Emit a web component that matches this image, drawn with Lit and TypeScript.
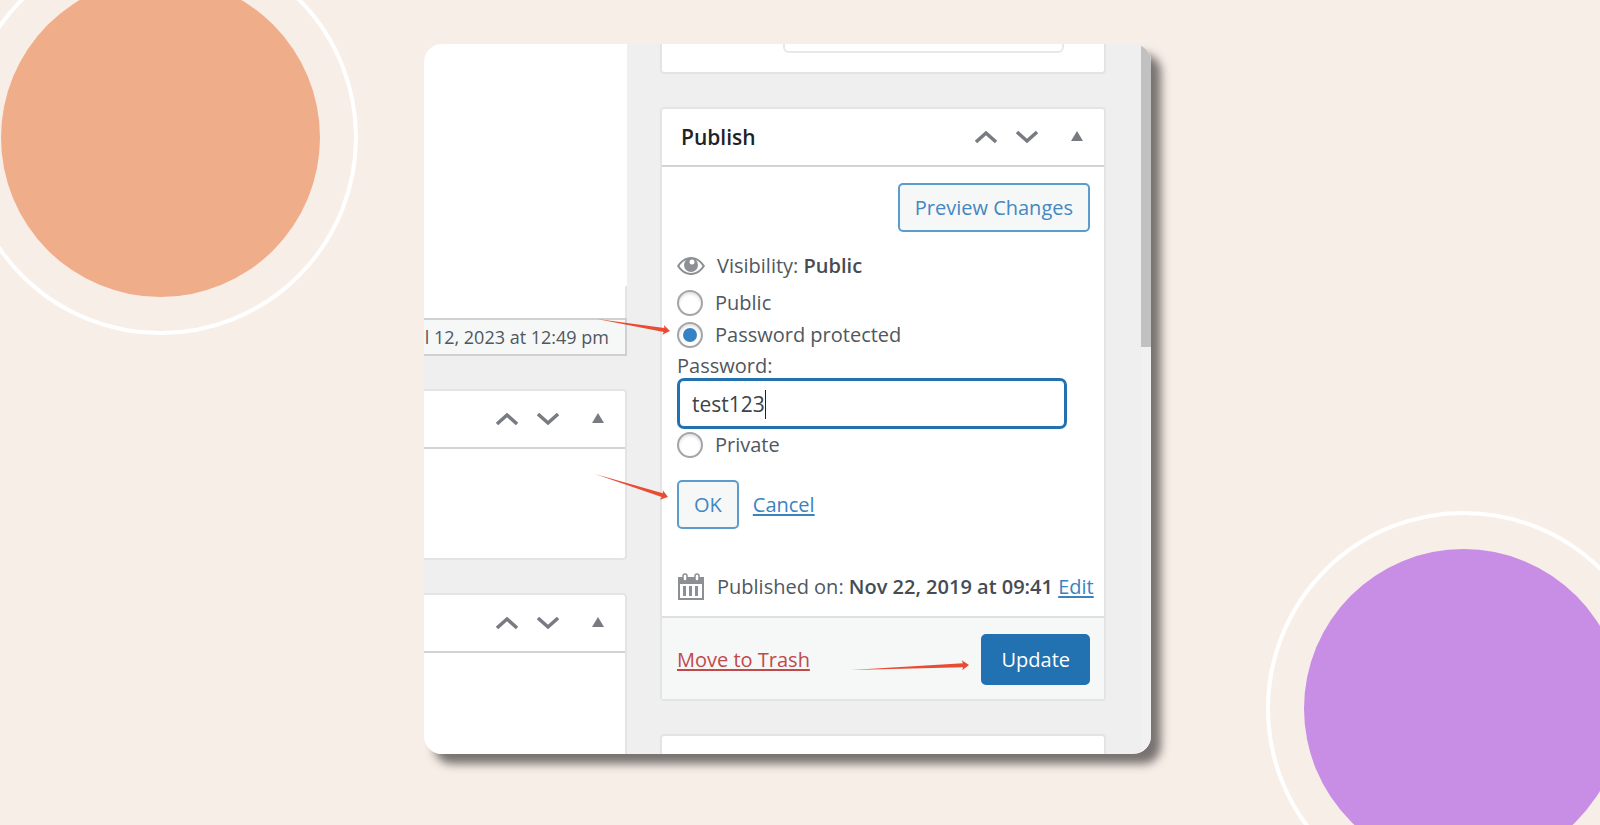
import { LitElement, html, css, svg } from "lit";
import { customElement, property, state } from "lit/decorators.js";

const arrow = (x1: number, y1: number, x2: number, y2: number) => {
  const len = Math.hypot(x2 - x1, y2 - y1);
  const angle = (Math.atan2(y2 - y1, x2 - x1) * 180) / Math.PI;
  const neck = len - 6;
  return svg`<path
    transform="translate(${x1} ${y1}) rotate(${angle})"
    d="M0 0 L${neck} -2 L${neck - 1} -5 L${len} 0 L${neck - 1} 5 L${neck} 2 Z" />`;
};

@customElement("panel-header")
export class PanelHeader extends LitElement {
  @property() heading = "";

  static styles = css`
    :host {
      display: flex;
      align-items: center;
      justify-content: space-between;
      box-sizing: border-box;
      height: 58px;
      padding: 0 15px 0 19px;
      border-bottom: 2px solid #d3d3d5;
    }
    .title {
      margin: 0;
      font-size: 21px;
      line-height: 32px;
      font-weight: 600;
      color: #1d2327;
    }
    .actions {
      display: flex;
      margin-left: auto;
      gap: 9px;
    }
    .action {
      display: grid;
      place-items: center;
      width: 32px;
      height: 32px;
      padding: 0;
      border: 0;
      background: none;
    }
    .toggle {
      width: 24px;
      margin-left: 13px;
    }
    svg {
      display: block;
      fill: none;
      stroke: #787c82;
      stroke-width: 3.5;
    }
    .solid {
      fill: #787c82;
      stroke: none;
    }
  `;

  render() {
    return html`
      ${this.heading ? html`<h2 class="title">${this.heading}</h2>` : ""}
      <div class="actions">
        <button class="action" aria-label="Move up">
          <svg width="22" height="14"><path d="M1 12 L11 3 L21 12" /></svg>
        </button>
        <button class="action" aria-label="Move down">
          <svg width="22" height="14"><path d="M1 2 L11 11 L21 2" /></svg>
        </button>
        <button class="action toggle" aria-label="Toggle panel">
          <svg class="solid" width="12" height="12"><path d="M0 10 L6 0 L12 10 Z" /></svg>
        </button>
      </div>
    `;
  }
}

@customElement("app-root")
export class AppRoot extends LitElement {
  @state() private visibility = "password";

  static styles = css`
    :host {
      position: relative;
      display: grid;
      place-items: center;
      box-sizing: border-box;
      min-height: 100vh;
      padding: 0 25px 27px 0;
      overflow: hidden;
      background: #f8eee8;
      font-family: "Open Sans", "Noto Sans", sans-serif;
      font-size: 20px;
      line-height: 32px;
      color: #50575e;
    }
    .ring {
      position: absolute;
      display: grid;
      place-items: center;
      box-sizing: border-box;
      width: 395px;
      height: 395px;
      border: 4px solid #fff;
      border-radius: 50%;
    }
    .ring::before {
      content: "";
      width: 319px;
      height: 319px;
      border-radius: 50%;
      background: #f0ad89;
    }
    .top-left {
      left: -37px;
      top: -60px;
    }
    .bottom-right {
      right: -61px;
      bottom: -81px;
    }
    .bottom-right::before {
      background: #c88de5;
    }
    .shot {
      position: relative;
      display: flex;
      width: min(727px, 100%);
      border-radius: 18px;
      background: #efeff0;
      box-shadow: 10px 10px 10px rgba(0, 0, 0, 0.52);
      overflow: hidden;
    }
    .columns {
      flex: 1;
      display: grid;
      grid-template-columns: minmax(0, 1fr) 446px;
      gap: 33px;
      min-width: 0;
      padding-right: 35px;
    }
    .column {
      display: flex;
      flex-direction: column;
      gap: 33px;
      min-width: 0;
    }
    .panel {
      border: 2px solid #e4e4e6;
      border-radius: 4px;
      background: #fff;
    }
    .left .panel {
      border-left: 0;
      border-radius: 0 4px 4px 0;
    }
    .editor {
      display: flex;
      flex-direction: column;
      background: #fff;
    }
    .canvas {
      height: 242px;
    }
    .edge {
      height: 32px;
      border-right: 2px solid #e4e4e6;
    }
    .status {
      display: flex;
      justify-content: flex-end;
      padding: 1px 16px 1px 0;
      border: 2px solid #cfd0d3;
      border-left: 0;
      background: #f6f7f7;
      font-size: 18px;
      white-space: nowrap;
      overflow: hidden;
    }
    .blank {
      height: 109px;
    }
    .left .last {
      flex: 1;
      border-bottom: 0;
      border-bottom-right-radius: 0;
    }
    .cut-top {
      height: 28px;
      border-top: 0;
      border-radius: 0 0 4px 4px;
    }
    .field-end {
      height: 7px;
      margin: 0 40px 0 121px;
      border: 2px solid #e8e8ea;
      border-top: 0;
      border-radius: 0 0 6px 6px;
    }
    .cut-bottom {
      height: 18px;
      border-bottom: 0;
      border-radius: 4px 4px 0 0;
    }
    .body {
      padding: 16px 14px 13px 15px;
    }
    .button {
      box-sizing: border-box;
      height: 49px;
      padding: 0 15px;
      border: 2px solid #5b9ccd;
      border-radius: 5px;
      background: #f6f7f7;
      color: #4288c2;
      font: inherit;
    }
    .primary {
      height: 51px;
      padding: 0 18px;
      border-color: #2271b1;
      background: #2271b1;
      color: #fff;
    }
    .preview {
      display: flex;
      justify-content: flex-end;
      margin-bottom: 18px;
    }
    .fact {
      display: flex;
      align-items: center;
      gap: 12px;
      white-space: nowrap;
    }
    .fact svg {
      flex: none;
      fill: #8c8f94;
    }
    .strong {
      font-weight: 600;
      color: #454c53;
    }
    .choices {
      margin: 0;
      padding: 5px 0 0;
      border: 0;
    }
    .choice {
      display: flex;
      align-items: center;
      gap: 12px;
    }
    .radio {
      appearance: none;
      display: grid;
      place-items: center;
      box-sizing: border-box;
      width: 26px;
      height: 26px;
      margin: 0;
      border: 2px solid #a3a5a9;
      border-radius: 50%;
      background: #fff;
      box-shadow: inset 0 2px 3px rgba(0, 0, 0, 0.12);
    }
    .radio:checked::before {
      content: "";
      width: 14px;
      height: 14px;
      border-radius: 50%;
      background: #3582c4;
    }
    .caption {
      display: block;
      padding-top: 3px;
      line-height: 24px;
    }
    .entry {
      position: relative;
      margin-right: 23px;
    }
    .text {
      display: block;
      box-sizing: border-box;
      width: 100%;
      height: 51px;
      padding: 0 12px;
      border: 3px solid #2271b1;
      border-radius: 7px;
      outline: 0;
      background: #fff;
      color: #3c434a;
      font: inherit;
      font-size: 21px;
    }
    .caret {
      position: absolute;
      left: 88px;
      top: 12px;
      width: 1px;
      height: 29px;
      background: #1d2327;
    }
    .confirm {
      display: flex;
      align-items: center;
      gap: 14px;
      margin: 19px 0 42px;
    }
    .link {
      color: #3a83bf;
      text-decoration: underline;
      text-decoration-thickness: 2px;
      text-underline-offset: 2px;
    }
    .danger {
      color: #c0494c;
    }
    .footer {
      display: flex;
      align-items: center;
      justify-content: space-between;
      padding: 16px 14px 14px 15px;
      border-top: 2px solid #e0e0e2;
      background: #f6f7f7;
    }
    .track {
      width: 10px;
      background: #f1f1f1;
    }
    .thumb {
      height: 303px;
      background: #c1c1c1;
    }
    .arrows {
      position: absolute;
      left: 0;
      top: 0;
      fill: #e84c33;
      pointer-events: none;
    }
  `;

  private choice(value: string, label: string) {
    return html`
      <label class="choice">
        <input
          class="radio"
          type="radio"
          name="visibility"
          .checked=${this.visibility === value}
          @change=${() => (this.visibility = value)}
        />
        ${label}
      </label>
    `;
  }

  render() {
    return html`
      <div class="ring top-left"></div>
      <div class="ring bottom-right"></div>
      <main class="shot">
        <div class="columns">
          <div class="column left">
            <div class="editor">
              <div class="canvas"></div>
              <div class="edge"></div>
              <div class="status">l 12, 2023 at 12:49 pm</div>
            </div>
            <section class="panel">
              <panel-header></panel-header>
              <div class="blank"></div>
            </section>
            <section class="panel last">
              <panel-header></panel-header>
            </section>
          </div>

          <div class="column">
            <div class="panel cut-top"><div class="field-end"></div></div>
            <section class="panel">
              <panel-header heading="Publish"></panel-header>
              <div class="body">
                <div class="preview"><button class="button">Preview Changes</button></div>
                <div class="fact">
                  <svg width="28" height="20" viewBox="0 0 28 20">
                    <path
                      fill-rule="evenodd"
                      d="M14 1C20 1 25 5 28 10C25 15 20 19 14 19S3 15 0 10C3 5 8 1 14 1ZM14 3C9 3 5 6 2.500 10C5 14 9 17 14 17S23 14 25.500 10C23 6 19 3 14 3Z"
                    />
                    <circle cx="14" cy="9" r="7" />
                    <circle cx="15" cy="6" r="2.500" fill="#fff" />
                  </svg>
                  <span>Visibility: <span class="strong">Public</span></span>
                </div>
                <fieldset class="choices" aria-label="Visibility">
                  ${this.choice("public", "Public")}
                  ${this.choice("password", "Password protected")}
                  <label class="caption" for="password">Password:</label>
                  <div class="entry">
                    <input class="text" id="password" type="text" value="test123" />
                    <span class="caret"></span>
                  </div>
                  ${this.choice("private", "Private")}
                </fieldset>
                <div class="confirm">
                  <button class="button">OK</button>
                  <a class="link" href="#">Cancel</a>
                </div>
                <div class="fact">
                  <svg width="28" height="28" viewBox="0 0 28 28">
                    <path
                      fill-rule="evenodd"
                      d="M1 4H27V27H1ZM3 11V25H25V11Z"
                    />
                    <path d="M6 13H9V23H6ZM12 13H15V23H12ZM18 13H21V23H18Z" />
                    <g stroke="#8c8f94" stroke-width="1.500" fill="#fff">
                      <rect x="6" y="1" width="4" height="7" rx="2" />
                      <rect x="18" y="1" width="4" height="7" rx="2" />
                    </g>
                  </svg>
                  <span
                    >Published on: <span class="strong">Nov 22, 2019 at 09:41</span>
                    <a class="link" href="#">Edit</a></span
                  >
                </div>
              </div>
              <footer class="footer">
                <a class="link danger" href="#">Move to Trash</a>
                <button class="button primary">Update</button>
              </footer>
            </section>
            <div class="panel cut-bottom"></div>
          </div>
        </div>

        <div class="track"><div class="thumb"></div></div>
        <svg class="arrows" width="727" height="710" aria-hidden="true">
          ${arrow(173, 275, 246, 287)} ${arrow(171, 430, 244, 453)} ${arrow(427, 626, 545, 621)}
        </svg>
      </main>
    `;
  }
}
